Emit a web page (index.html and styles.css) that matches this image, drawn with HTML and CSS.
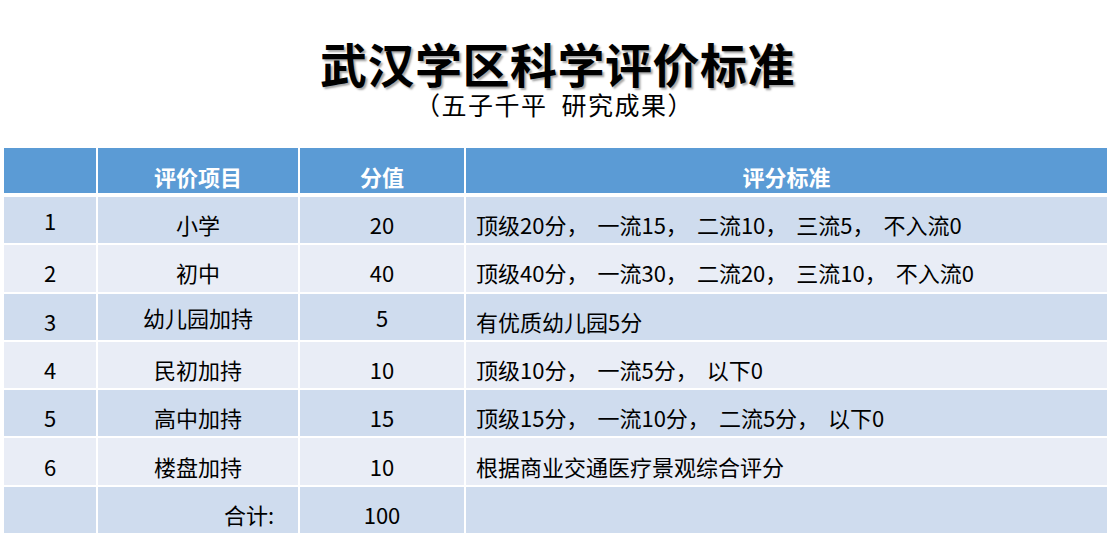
FILE: index.html
```html
<!DOCTYPE html>
<html lang="zh-CN">
<head>
<meta charset="utf-8">
<title>武汉学区科学评价标准</title>
<link rel="stylesheet" href="styles.css">
</head>
<body>
<div class="page">
  <header class="heading">
    <h1 class="title">武汉学区科学评价标准</h1>
    <p class="subtitle">（五子千平&nbsp;&nbsp;研究成果）</p>
  </header>
  <div class="table">
    <div class="cell head"></div>
    <div class="cell head c2">评价项目</div>
    <div class="cell head c3">分值</div>
    <div class="cell head c4h">评分标准</div>

    <div class="cell odd c1 up">1</div>
    <div class="cell odd c2 down">小学</div>
    <div class="cell odd c3 down">20</div>
    <div class="cell odd c4 down">顶级20分<span class="cm">，</span>一流15<span class="cm">，</span>二流10<span class="cm">，</span>三流5<span class="cm">，</span>不入流0</div>

    <div class="cell even c1 down">2</div>
    <div class="cell even c2 down">初中</div>
    <div class="cell even c3 down">40</div>
    <div class="cell even c4 down">顶级40分<span class="cm">，</span>一流30<span class="cm">，</span>二流20<span class="cm">，</span>三流10<span class="cm">，</span>不入流0</div>

    <div class="cell odd c1 down">3</div>
    <div class="cell odd c2">幼儿园加持</div>
    <div class="cell odd c3">5</div>
    <div class="cell odd c4 down">有优质幼儿园5分</div>

    <div class="cell even c1 down">4</div>
    <div class="cell even c2 down">民初加持</div>
    <div class="cell even c3 down">10</div>
    <div class="cell even c4 down">顶级10分<span class="cm">，</span>一流5分<span class="cm">，</span>以下0</div>

    <div class="cell odd c1 down">5</div>
    <div class="cell odd c2 down">高中加持</div>
    <div class="cell odd c3 down">15</div>
    <div class="cell odd c4 down">顶级15分<span class="cm">，</span>一流10分<span class="cm">，</span>二流5分<span class="cm">，</span>以下0</div>

    <div class="cell even c1 down">6</div>
    <div class="cell even c2 down">楼盘加持</div>
    <div class="cell even c3 down">10</div>
    <div class="cell even c4 down">根据商业交通医疗景观综合评分</div>

    <div class="cell odd c1"></div>
    <div class="cell odd c2r down">合计:</div>
    <div class="cell odd c3 down">100</div>
    <div class="cell odd c4"></div>
  </div>
</div>
</body>
</html>
```
FILE: styles.css
```css
html, body {
  margin: 0;
  padding: 0;
  background: #ffffff;
}
body {
  font-family: "Noto Sans CJK SC", "Noto Sans", sans-serif;
  color: #000000;
}
.page {
  width: 1113px;
  height: 539px;
  overflow: hidden;
}
.heading {
  padding-top: 37px;
  text-align: center;
  height: 120px;
  box-sizing: border-box;
}
.title {
  margin: 0;
  font-size: 47px;
  line-height: 52px;
  font-weight: 700;
  letter-spacing: 0.5px;
  text-shadow: 2px 2px 2px rgba(0, 0, 0, 0.35);
  padding-left: 2px;
}
.subtitle {
  margin: 0;
  font-size: 25px;
  line-height: 30px;
  font-weight: 400;
  letter-spacing: 1.5px;
  padding-right: 4px;
}
.table {
  margin-left: 4px;
  margin-top: 28px;
  width: 1103px;
  display: grid;
  grid-template-columns: 92px 200px 164px 1fr;
  grid-template-rows: 47px repeat(7, 46.3px);
  column-gap: 2px;
  row-gap: 2px;
}
.cell {
  display: flex;
  align-items: center;
  font-size: 22px;
  box-sizing: border-box;
  white-space: nowrap;
}
.head {
  background: #5b9bd5;
  color: #ffffff;
  font-weight: 700;
  height: 45px;
  padding-top: 10px;
}
.odd { background: #cfdcee; }
.even { background: #e9edf6; }
.c1, .c2, .c3, .c4h { justify-content: center; }
.c2r { justify-content: flex-end; padding-right: 24px; }
.c4 { justify-content: flex-start; padding-left: 10px; }
.cm { margin-right: 9px; }
.down { padding-top: 8px; }
.up { padding-top: 0; }
```
